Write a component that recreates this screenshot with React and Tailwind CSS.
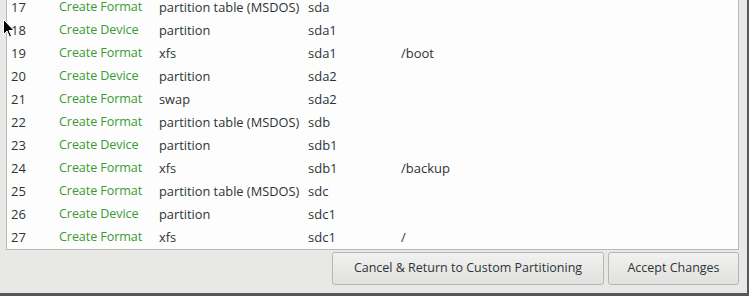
import React from "react";

const rows = [
  ["17", "Create Format", "partition table (MSDOS)", "sda", ""],
  ["18", "Create Device", "partition", "sda1", ""],
  ["19", "Create Format", "xfs", "sda1", "/boot"],
  ["20", "Create Device", "partition", "sda2", ""],
  ["21", "Create Format", "swap", "sda2", ""],
  ["22", "Create Format", "partition table (MSDOS)", "sdb", ""],
  ["23", "Create Device", "partition", "sdb1", ""],
  ["24", "Create Format", "xfs", "sdb1", "/backup"],
  ["25", "Create Format", "partition table (MSDOS)", "sdc", ""],
  ["26", "Create Device", "partition", "sdc1", ""],
  ["27", "Create Format", "xfs", "sdc1", "/"],
];

export default function App() {
  return (
    <div
      className="relative w-[749px] h-[296px] overflow-hidden bg-[#e8e8e7] border-r-2 border-b-[3px] border-[#575757] flex flex-col text-[13px] text-[#2e3436]"
      style={{ fontFamily: '"Open Sans", "DejaVu Sans", sans-serif' }}
    >
      <div className="ml-[6px] mr-[8px] h-[250px] shrink-0 bg-[#fdfdfd] border-x border-b border-[#b8b8b5] overflow-hidden">
        <div className="-mt-[4px] flex flex-col">
          {rows.map((r) => (
            <div key={r[0]} className="h-[23px] flex items-center leading-none">
              <div className="w-[52px] pl-[4px]">{r[0]}</div>
              <div className="w-[100px] text-[12.6px] tracking-[-0.1px] text-[#3a9b34]">{r[1]}</div>
              <div className="w-[149px] text-[12.8px]">{r[2]}</div>
              <div className="w-[93px]">{r[3]}</div>
              <div>{r[4]}</div>
            </div>
          ))}
        </div>
      </div>
      <div className="mt-[2px] mr-[8px] flex justify-end gap-[4px]">
        <button className="h-[33px] w-[272px] rounded-[3px] border border-[#b6b6b3] bg-gradient-to-b from-[#f1f1f0] to-[#e1e1df] text-[12.5px] text-[#2e3436]">
          Cancel &amp; Return to Custom Partitioning
        </button>
        <button className="h-[33px] w-[131px] rounded-[3px] border border-[#b6b6b3] bg-gradient-to-b from-[#f1f1f0] to-[#e1e1df] text-[12.5px] text-[#2e3436]">
          Accept Changes
        </button>
      </div>
      <svg
        className="absolute left-[3px] top-[19px]"
        width="12"
        height="19"
        viewBox="0 0 12 19"
      >
        <path
          d="M0.5 0.5 L0.5 15.5 L4 12 L6.5 18 L8.5 17 L6 11.5 L11 11.5 Z"
          fill="#000"
          stroke="#fff"
          strokeWidth="1"
        />
      </svg>
    </div>
  );
}
